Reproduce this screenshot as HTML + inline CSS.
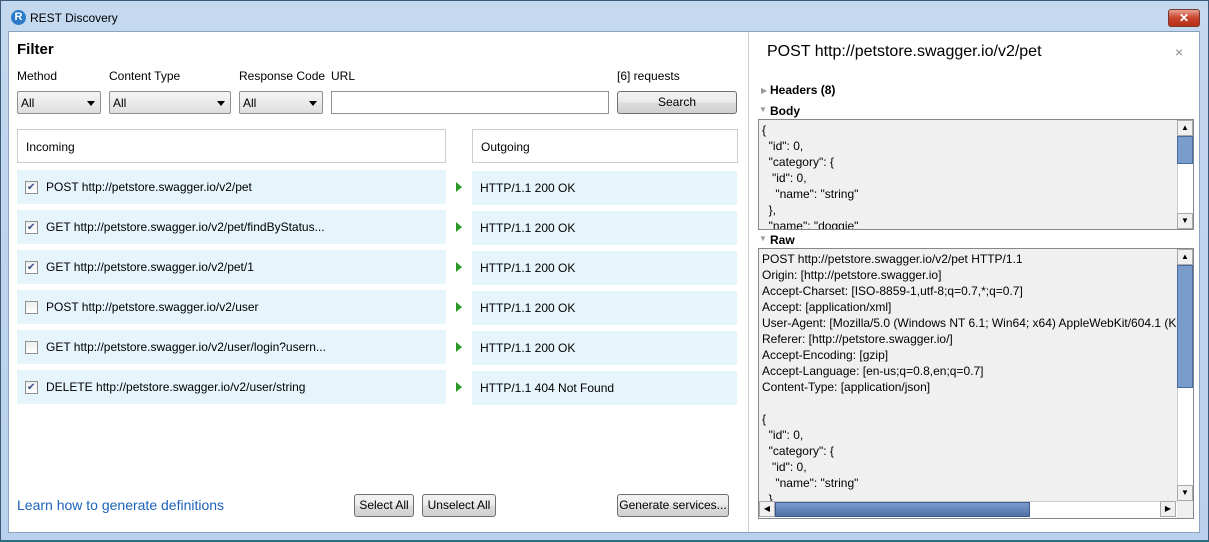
<!DOCTYPE html>
<html><head><style>
*{margin:0;padding:0;box-sizing:border-box}
body{width:1209px;height:542px;position:relative;overflow:hidden;font-family:"Liberation Sans",sans-serif;font-size:12px;color:#000;background:linear-gradient(#c4d8ef,#b9d1ec)}
.a{position:absolute}
.frame{left:0;top:0;width:1209px;height:542px;border:1px solid #3b5a7a;border-bottom:2px solid #2a6f80}
.content{left:8px;top:31px;width:1192px;height:502px;background:#fff;border:1px solid #8aa3bf}
.lbl{font-size:12px}
.sel{height:23px;border:1px solid #8e8f8f;border-radius:2px;background:linear-gradient(#f6f6f6,#dedede);padding:4px 3px;font-size:12px}
.sel:after{content:"";position:absolute;right:5px;top:9px;border:4px solid transparent;border-top:5px solid #000}
.btn{height:23px;border:1px solid #707070;border-radius:3px;background:linear-gradient(#f2f2f2,#ebebeb 50%,#dddddd 51%,#cfcfcf);text-align:center;line-height:21px;font-size:12px}
.hdr{height:34px;border:1px solid #ccc;padding:10px 8px}
.row{height:34px;background:#e6f4fb;line-height:34px;padding-left:29px}
.cb{position:absolute;left:8px;top:11px;width:13px;height:13px;border:1px solid #8e8f8f;background:linear-gradient(#eee,#fff)}
.cb.on:after{content:"✔";position:absolute;left:1px;top:-11px;font-size:10px;color:#3a4f8a}
.arr{width:0;height:0;border-top:5px solid transparent;border-bottom:5px solid transparent;border-left:6px solid #2a9a2a}
.out{height:34px;background:#e6f4fb;line-height:34px;padding-left:8px}
.box{background:#f0f0f0;border:1px solid #828790;line-height:16px;padding:2px 3px;overflow:hidden;white-space:pre;font-size:12px}
.vs{background:#fff;border-left:1px solid #ccc}
.sb{width:16px;height:16px;background:#f0f0f0;border:1px solid #aaa}
</style></head><body>
<div class="a frame"></div>
<div class="a" style="left:11px;top:10px;width:15px;height:15px;border-radius:50%;background:#2b7bc8;color:#fff;font-weight:bold;font-size:11px;text-align:center;line-height:15px">R</div>
<div class="a" style="left:30px;top:11px;font-size:12px">REST Discovery</div>
<div class="a" style="left:1168px;top:9px;width:32px;height:18px;border:1px solid #7a3a30;border-radius:3px;background:linear-gradient(#e8a090,#c8442c 50%,#b83018);color:#fff;text-align:center;font-weight:bold;font-size:12px;line-height:16px">✕</div>
<div class="a content"></div>
<div class="a" style="left:17px;top:41px;font-size:15px;font-weight:bold">Filter</div>
<div class="a lbl" style="left:17px;top:69px">Method</div>
<div class="a lbl" style="left:109px;top:69px">Content Type</div>
<div class="a lbl" style="left:239px;top:69px">Response Code</div>
<div class="a lbl" style="left:331px;top:69px">URL</div>
<div class="a lbl" style="left:617px;top:69px">[6] requests</div>
<div class="a sel" style="left:17px;top:91px;width:84px">All</div>
<div class="a sel" style="left:109px;top:91px;width:122px">All</div>
<div class="a sel" style="left:239px;top:91px;width:84px">All</div>
<div class="a" style="left:331px;top:91px;width:278px;height:23px;border:1px solid #8e8f8f;background:#fff"></div>
<div class="a btn" style="left:617px;top:91px;width:120px">Search</div>
<div class="a hdr" style="left:17px;top:129px;width:429px">Incoming</div>
<div class="a hdr" style="left:472px;top:129px;width:266px">Outgoing</div>

<div class="a row" style="left:17px;top:170px;width:429px"><span class="cb on"></span>POST http://petstore.swagger.io/v2/pet</div>
<div class="a row" style="left:17px;top:210px;width:429px"><span class="cb on"></span>GET http://petstore.swagger.io/v2/pet/findByStatus...</div>
<div class="a row" style="left:17px;top:250px;width:429px"><span class="cb on"></span>GET http://petstore.swagger.io/v2/pet/1</div>
<div class="a row" style="left:17px;top:290px;width:429px"><span class="cb"></span>POST http://petstore.swagger.io/v2/user</div>
<div class="a row" style="left:17px;top:330px;width:429px"><span class="cb"></span>GET http://petstore.swagger.io/v2/user/login?usern...</div>
<div class="a row" style="left:17px;top:370px;width:429px"><span class="cb on"></span>DELETE http://petstore.swagger.io/v2/user/string</div>

<div class="a arr" style="left:456px;top:182px"></div>
<div class="a arr" style="left:456px;top:222px"></div>
<div class="a arr" style="left:456px;top:262px"></div>
<div class="a arr" style="left:456px;top:302px"></div>
<div class="a arr" style="left:456px;top:342px"></div>
<div class="a arr" style="left:456px;top:382px"></div>

<div class="a out" style="left:472px;top:171px;width:265px">HTTP/1.1 200 OK</div>
<div class="a out" style="left:472px;top:211px;width:265px">HTTP/1.1 200 OK</div>
<div class="a out" style="left:472px;top:251px;width:265px">HTTP/1.1 200 OK</div>
<div class="a out" style="left:472px;top:291px;width:265px">HTTP/1.1 200 OK</div>
<div class="a out" style="left:472px;top:331px;width:265px">HTTP/1.1 200 OK</div>
<div class="a out" style="left:472px;top:371px;width:265px">HTTP/1.1 404 Not Found</div>

<div class="a" style="left:17px;top:497px;font-size:14px;color:#1c62b9">Learn how to generate definitions</div>
<div class="a btn" style="left:354px;top:494px;width:60px">Select All</div>
<div class="a btn" style="left:422px;top:494px;width:74px">Unselect All</div>
<div class="a btn" style="left:617px;top:494px;width:112px">Generate services...</div>

<div class="a" style="left:748px;top:32px;width:1px;height:500px;background:#d0d0d0"></div>
<div class="a" style="left:767px;top:43px;font-size:16px">POST http://petstore.swagger.io/v2/pet</div>
<div class="a" style="left:1175px;top:44px;font-size:14px;color:#888">×</div>
<div class="a" style="left:761px;top:86px;font-size:8px;color:#999">▶</div>
<div class="a" style="left:770px;top:83px;font-weight:bold">Headers (8)</div>
<div class="a" style="left:759px;top:105px;font-size:8px;color:#999">▼</div>
<div class="a" style="left:770px;top:104px;font-weight:bold">Body</div>
<div class="a box" style="left:758px;top:119px;width:436px;height:111px">{
  "id": 0,
  "category": {
   "id": 0,
    "name": "string"
  },
  "name": "doggie"</div>
<div class="a vs" style="left:1177px;top:120px;width:16px;height:109px"></div>
<div class="a sb" style="left:1177px;top:120px;font-size:8px;text-align:center;line-height:14px">▲</div>
<div class="a" style="left:1177px;top:136px;width:16px;height:28px;background:#7a9ccc;border:1px solid #4a6aa0"></div>
<div class="a sb" style="left:1177px;top:213px;font-size:8px;text-align:center;line-height:14px">▼</div>
<div class="a" style="left:759px;top:234px;font-size:8px;color:#999">▼</div>
<div class="a" style="left:770px;top:233px;font-weight:bold">Raw</div>
<div class="a box" style="left:758px;top:248px;width:436px;height:271px">POST http://petstore.swagger.io/v2/pet HTTP/1.1
Origin: [http://petstore.swagger.io]
Accept-Charset: [ISO-8859-1,utf-8;q=0.7,*;q=0.7]
Accept: [application/xml]
User-Agent: [Mozilla/5.0 (Windows NT 6.1; Win64; x64) AppleWebKit/604.1 (KHTML
Referer: [http://petstore.swagger.io/]
Accept-Encoding: [gzip]
Accept-Language: [en-us;q=0.8,en;q=0.7]
Content-Type: [application/json]

{
  "id": 0,
  "category": {
   "id": 0,
    "name": "string"
  }</div>
<div class="a vs" style="left:1177px;top:249px;width:16px;height:252px"></div>
<div class="a sb" style="left:1177px;top:249px;font-size:8px;text-align:center;line-height:14px">▲</div>
<div class="a" style="left:1177px;top:265px;width:16px;height:123px;background:#7a9ccc;border:1px solid #4a6aa0"></div>
<div class="a sb" style="left:1177px;top:485px;font-size:8px;text-align:center;line-height:14px">▼</div>
<div class="a" style="left:759px;top:501px;width:418px;height:17px;background:#fff;border-top:1px solid #ccc"></div>
<div class="a sb" style="left:759px;top:501px;font-size:8px;text-align:center;line-height:14px">◀</div>
<div class="a" style="left:775px;top:502px;width:255px;height:15px;background:linear-gradient(#7a9ccc,#4d6fa5);border:1px solid #3a5a90"></div>
<div class="a sb" style="left:1160px;top:501px;font-size:8px;text-align:center;line-height:14px">▶</div>
</body></html>
